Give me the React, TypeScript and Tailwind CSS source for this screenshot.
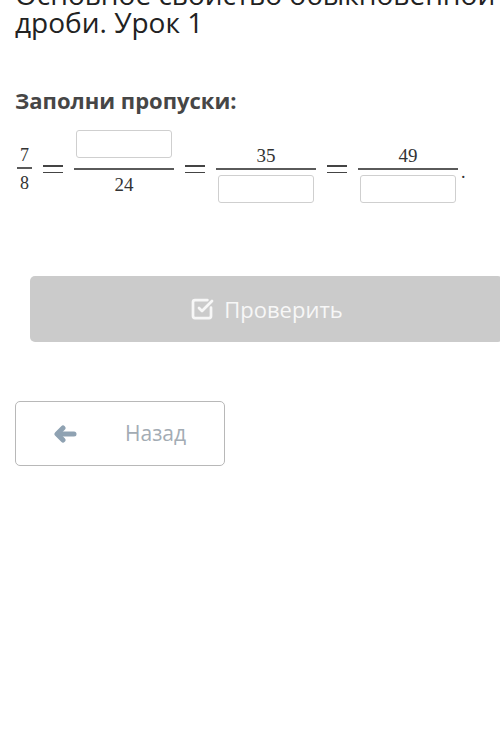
import { SquareCheckBig } from 'lucide-react';

const serif = { fontFamily: '"Liberation Serif", "DejaVu Serif", serif' };

function Blank({ top }: { top: boolean }) {
  return (
    <div
      className={`h-[28px] w-[96px] rounded-[3px] border-[1.5px] border-[#cfcfcf] bg-white ${
        top ? 'mb-[10px]' : 'mt-[5px]'
      }`}
    />
  );
}

function Frac({ num, den }: { num: string | null; den: string | null }) {
  return (
    <div className="flex w-[100px] flex-col items-center">
      <div className="flex h-[38px] items-end justify-center">
        {num === null ? (
          <Blank top />
        ) : (
          <span className="mb-[3px] text-[19px] leading-none text-[#333]">{num}</span>
        )}
      </div>
      <div className="h-[2px] w-full bg-[#5a5a5a]" />
      <div className="flex h-[38px] items-start justify-center">
        {den === null ? (
          <Blank top={false} />
        ) : (
          <span className="mt-[5px] text-[19px] leading-none text-[#333]">{den}</span>
        )}
      </div>
    </div>
  );
}

function Eq() {
  return (
    <div className="flex w-[20px] flex-col gap-[5px]">
      <div className="h-[1.5px] w-full bg-[#444]" />
      <div className="h-[1.5px] w-full bg-[#444]" />
    </div>
  );
}

export default function App() {
  return (
    <div
      className="h-[751px] w-[500px] overflow-hidden bg-white"
      style={{ fontFamily: '"Open Sans", "Noto Sans", sans-serif' }}
    >
      <h1 className="-mt-[20px] ml-[15px] w-[520px] text-[28px] leading-[28px] font-normal text-[#222]">
        Основное свойство обыкновенной дроби. Урок 1
      </h1>

      <div className="mt-[50px] ml-[15px] text-[22px] leading-[28px] font-bold text-[#464646]">
        Заполни пропуски:
      </div>

      <div className="mt-[16px] ml-[17px] flex items-center gap-[11px]" style={serif}>
        <div className="flex w-[15px] flex-col items-center">
          <span className="mb-[3px] text-[18px] leading-none text-[#333]">7</span>
          <div className="h-[1.5px] w-full bg-[#5a5a5a]" />
          <span className="mt-[5px] text-[18px] leading-none text-[#333]">8</span>
        </div>
        <Eq />
        <Frac num={null} den="24" />
        <Eq />
        <Frac num="35" den={null} />
        <Eq />
        <div className="flex items-center">
          <Frac num="49" den={null} />
          <span className="mt-[6px] ml-[3px] text-[18px] leading-none text-[#333]">.</span>
        </div>
      </div>

      <button className="mt-[68px] ml-[30px] flex h-[66px] w-[473px] items-center justify-center gap-[10px] rounded-[5px] bg-[#cbcbcb] text-[22px] text-[#f7f7f7]">
        <SquareCheckBig size={24} strokeWidth={2.75} />
        <span>Проверить</span>
      </button>

      <button className="mt-[59px] ml-[15px] flex h-[65px] w-[210px] items-center rounded-[5px] border-[1.5px] border-[#b8b8b8] bg-white text-[21px] text-[#a3acb4]">
        <svg
          width="24"
          height="18"
          viewBox="0 0 24 18"
          className="ml-[37px]"
          fill="none"
          stroke="#8fa2b2"
          strokeWidth="5"
          strokeLinecap="round"
          strokeLinejoin="round"
        >
          <path d="M21 9H5" />
          <path d="M10 3 4 9l6 6" />
        </svg>
        <span className="ml-[48px]">Назад</span>
      </button>
    </div>
  );
}
